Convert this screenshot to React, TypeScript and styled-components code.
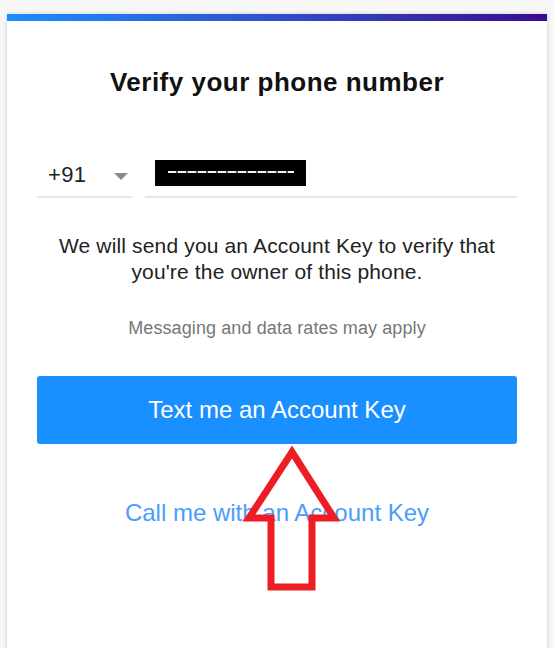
import React from "react";
import styled, { createGlobalStyle } from "styled-components";

const Global = createGlobalStyle`
  html, body { margin: 0; padding: 0; background: #f7f7f7; }
  body { font-family: "Liberation Sans", Arial, sans-serif; overflow: hidden; }
`;

const Page = styled.div`
  padding: 14px 7px 0 7px;
  width: 554px;
  box-sizing: border-box;
`;

const Card = styled.div`
  position: relative;
  width: 540px;
  height: 660px;
  background: #ffffff;
  box-shadow: 0 0 4px rgba(0, 0, 0, 0.18);
  display: flex;
  flex-direction: column;
`;

const GradientBar = styled.div`
  height: 7px;
  background: linear-gradient(to right, #1b8dff 0%, #2f55d0 45%, #3a0c91 100%);
`;

const Content = styled.div`
  padding: 46px 30px 0 30px;
  display: flex;
  flex-direction: column;
  align-items: stretch;
`;

const Title = styled.h1`
  margin: 0;
  font-size: 26px;
  line-height: 30px;
  font-weight: bold;
  color: #111;
  text-align: center;
  letter-spacing: 0.5px;
`;

const PhoneRow = styled.div`
  margin-top: 57px;
  display: flex;
  gap: 13px;
`;

const Field = styled.div<{ $width?: number }>`
  height: 42px;
  border-bottom: 2px solid #e6e6e6;
  display: flex;
  align-items: center;
  box-sizing: content-box;
  ${(p) => (p.$width ? `width: ${p.$width}px; flex: none;` : "flex: 1;")}
`;

const CountryCode = styled.span`
  margin-left: 11px;
  font-size: 22px;
  color: #222;
  letter-spacing: 0.3px;
  flex: 1;
`;

const Caret = styled.span`
  width: 0;
  height: 0;
  border-left: 7px solid transparent;
  border-right: 7px solid transparent;
  border-top: 7px solid #8a8a8a;
  margin-right: 4px;
  margin-top: 2px;
`;

const Redaction = styled.div`
  margin-left: 10px;
  margin-top: -4px;
  width: 151px;
  height: 26px;
  background: #000;
  display: flex;
  align-items: center;
  justify-content: center;
`;

const Dashes = styled.div`
  width: 126px;
  height: 2px;
  margin-top: -2px;
  background: repeating-linear-gradient(
    to right,
    #f3f3f3 0px,
    #f3f3f3 8px,
    #555 8px,
    #555 10px
  );
`;

const Info = styled.p`
  margin: 35px 0 0 0;
  font-size: 21px;
  line-height: 26px;
  color: #222;
  text-align: center;
  letter-spacing: 0.15px;
`;

const Note = styled.p`
  margin: 33px 0 0 0;
  font-size: 18px;
  line-height: 20px;
  color: #777;
  text-align: center;
  letter-spacing: 0.1px;
`;

const PrimaryButton = styled.button`
  margin-top: 38px;
  height: 68px;
  border: none;
  border-radius: 3px;
  background: #1a8fff;
  color: #fff;
  font-family: "Liberation Sans", Arial, sans-serif;
  font-size: 24px;
  cursor: pointer;
`;

const SecondaryLink = styled.a`
  margin-top: 55px;
  font-size: 24px;
  line-height: 28px;
  color: #4a9dff;
  text-align: center;
  text-decoration: none;
`;

const ArrowOverlay = styled.svg`
  position: absolute;
  left: 0;
  top: 0;
  pointer-events: none;
`;

export default function App() {
  return (
    <>
      <Global />
      <Page>
        <Card>
          <GradientBar />
          <Content>
            <Title>Verify your phone number</Title>
            <PhoneRow>
              <Field $width={95}>
                <CountryCode>+91</CountryCode>
                <Caret />
              </Field>
              <Field>
                <Redaction>
                  <Dashes />
                </Redaction>
              </Field>
            </PhoneRow>
            <Info>
              We will send you an Account Key to verify that
              <br />
              you're the owner of this phone.
            </Info>
            <Note>Messaging and data rates may apply</Note>
            <PrimaryButton>Text me an Account Key</PrimaryButton>
            <SecondaryLink href="#">Call me with an Account Key</SecondaryLink>
          </Content>
          <ArrowOverlay width="540" height="640" viewBox="0 0 540 640">
            <polygon
              points="285,438 327,504 305,504 305,573 264,573 264,504 242,504"
              fill="none"
              stroke="#ee1c25"
              strokeWidth="7"
              strokeLinejoin="miter"
            />
          </ArrowOverlay>
        </Card>
      </Page>
    </>
  );
}
